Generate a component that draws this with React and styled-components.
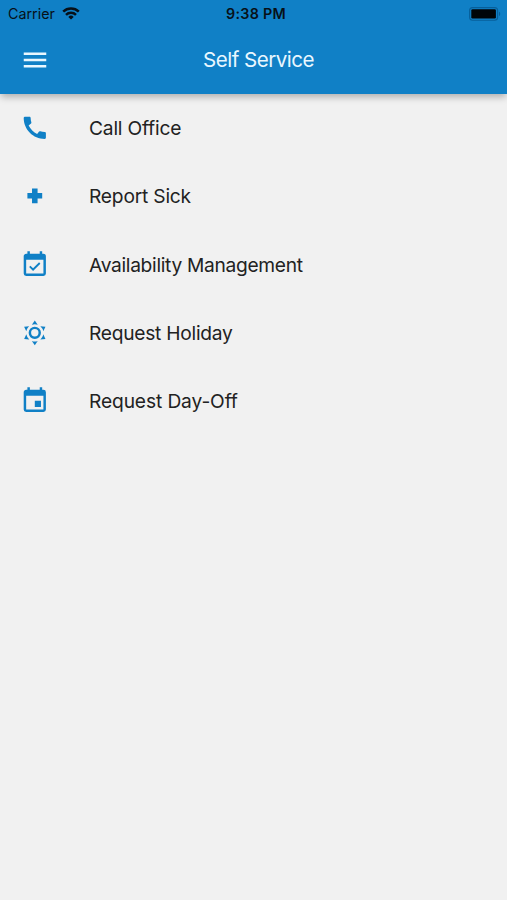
import styled, { createGlobalStyle } from 'styled-components';
import { MdCall, MdMenu } from 'react-icons/md';

const menuItems = [
    { label: 'Call Office', icon: 'phone', tracking: -0.2 },
    { label: 'Report Sick', icon: 'plus', tracking: -0.2 },
    { label: 'Availability Management', icon: 'check', tracking: -0.31 },
    { label: 'Request Holiday', icon: 'sun', tracking: -0.26 },
    { label: 'Request Day-Off', icon: 'day', tracking: -0.12 },
];

const paths = {
    plus: 'M9.75 6h4.5v3.75H18v4.5h-3.75V18h-4.5v-3.75H6v-4.5h3.75z',
    check: 'M19 19H5V8h14M19 3h-1V1h-2v2H8V1H6v2H5C3.89 3 3 3.9 3 5v14a2 2 0 0 0 2 2h14a2 2 0 0 0 2-2V5a2 2 0 0 0-2-2M16.53 11.06L15.47 10l-4.88 4.88-2.12-2.12-1.06 1.06L10.59 17z',
    sun: 'M12 7a5 5 0 0 1 5 5 5 5 0 0 1-5 5 5 5 0 0 1-5-5 5 5 0 0 1 5-5m0 2a3 3 0 0 0-3 3 3 3 0 0 0 3 3 3 3 0 0 0 3-3 3 3 0 0 0-3-3m0-7l2.39 3.42C13.65 5.15 12.84 5 12 5s-1.65.15-2.39.42L12 2M3.34 7l4.16-.35A7.2 7.2 0 0 0 5.94 8.5c-.44.74-.69 1.5-.83 2.29L3.34 7m.02 10l1.76-3.77a7.13 7.13 0 0 0 2.38 4.14L3.36 17M20.65 7l-1.77 3.79a7.02 7.02 0 0 0-2.38-4.15L20.65 7m-.01 10l-4.14.36c.59-.51 1.12-1.14 1.54-1.86.42-.73.69-1.5.83-2.29L20.64 17M12 22l-2.41-3.44c.74.27 1.55.44 2.41.44.82 0 1.63-.17 2.37-.44L12 22z',
    day: 'M19 19H5V8h14m-3-7v2H8V1H6v2H5c-1.11 0-2 .9-2 2v14a2 2 0 0 0 2 2h14a2 2 0 0 0 2-2V5a2 2 0 0 0-2-2h-1V1m-1 11h-5v5h5z',
};

function ItemIcon({ name }) {
    if (name === 'phone') return <MdCall />;
    return (
        <svg viewBox="0 0 24 24" fill="currentColor">
            <path d={paths[name]} />
        </svg>
    );
}

function StatusBar() {
    return (
        <Status>
            <Carrier>
                <span>Carrier</span>
                <svg width="18" height="13" viewBox="0 0 18 13" fill="none" stroke="#071018" strokeWidth="2.5">
                    <path d="M1.2 4.7a11.3 11.3 0 0 1 15.6 0" />
                    <path d="M4 7.8a7.2 7.2 0 0 1 10 0" />
                    <path d="M9 12.6L6.3 9.9a3.9 3.9 0 0 1 5.4 0z" fill="#071018" stroke="none" />
                </svg>
            </Carrier>
            <Clock>9:38 PM</Clock>
            <Battery>
                <svg width="32" height="14" viewBox="0 0 32 14">
                    <rect x="0.6" y="0.6" width="28" height="12.6" rx="3" fill="none" stroke="#075f9a" strokeWidth="1.1" />
                    <rect x="2.3" y="2.3" width="24.6" height="9.2" rx="1.3" fill="#000508" />
                    <path d="M30 4.8c1.6.5 1.6 3.7 0 4.2z" fill="#075f9a" />
                </svg>
            </Battery>
        </Status>
    );
}

export default function App() {
    return (
        <Screen>
            <GlobalStyle />
            <Header>
                <StatusBar />
                <Toolbar>
                    <MenuButton aria-label="Menu">
                        <MdMenu />
                    </MenuButton>
                    <Title>Self Service</Title>
                </Toolbar>
            </Header>
            <List>
                {menuItems.map((item) => (
                    <Item key={item.label}>
                        <IconSlot>
                            <ItemIcon name={item.icon} />
                        </IconSlot>
                        <Label $tracking={item.tracking}>{item.label}</Label>
                    </Item>
                ))}
            </List>
        </Screen>
    );
}

const GlobalStyle = createGlobalStyle`
    * {
        box-sizing: border-box;
    }

    body {
        margin: 0;
        background: #f1f1f1;
        font-family: Inter, Roboto, sans-serif;
    }
`;

const Screen = styled.div`
    min-height: 900px;
    background: #f1f1f1;
    overflow: hidden;
`;

const Header = styled.header`
    height: 93.5px;
    background: #1080c6;
    box-shadow: 0 4px 7px -1px rgba(0, 0, 0, 0.28);
`;

const Status = styled.div`
    height: 26px;
    display: grid;
    grid-template-columns: 1fr auto 1fr;
    align-items: center;
    padding: 1px 6px 0 8px;
    color: #071018;
    font-size: 14.3px;
`;

const Carrier = styled.div`
    display: flex;
    align-items: center;
    gap: 7px;

    svg {
        display: block;
    }
`;

const Clock = styled.div`
    padding-left: 3px;
    font-weight: 600;
    letter-spacing: 0.3px;
`;

const Battery = styled.div`
    display: flex;
    justify-content: flex-end;
`;

const Toolbar = styled.div`
    height: 67.5px;
    display: grid;
    grid-template-columns: 56px 1fr 56px;
    align-items: center;
    padding: 0 20px;
    color: #fff;
`;

const MenuButton = styled.button`
    width: 30px;
    height: 30px;
    padding: 0;
    border: 0;
    background: none;
    color: #e9f7ff;
    cursor: pointer;

    svg {
        display: block;
        width: 30px;
        height: 30px;
    }
`;

const Title = styled.h1`
    margin: 0;
    padding-left: 10px;
    text-align: center;
    font-size: 20.6px;
    font-weight: 400;
    letter-spacing: -0.53px;
    color: #e9f7ff;
`;

const List = styled.ul`
    list-style: none;
    margin: 0;
    padding: 0;
`;

const Item = styled.li`
    height: 68.4px;
    display: flex;
    align-items: center;
    padding-left: 20px;
`;

const IconSlot = styled.span`
    width: 69px;
    flex: none;
    color: #1080c6;

    svg {
        display: block;
        width: 29.6px;
        height: 29.6px;
    }
`;

const Label = styled.span`
    padding-top: 0.4px;
    font-size: 19.2px;
    letter-spacing: ${(props) => props.$tracking}px;
    color: #222;
`;
